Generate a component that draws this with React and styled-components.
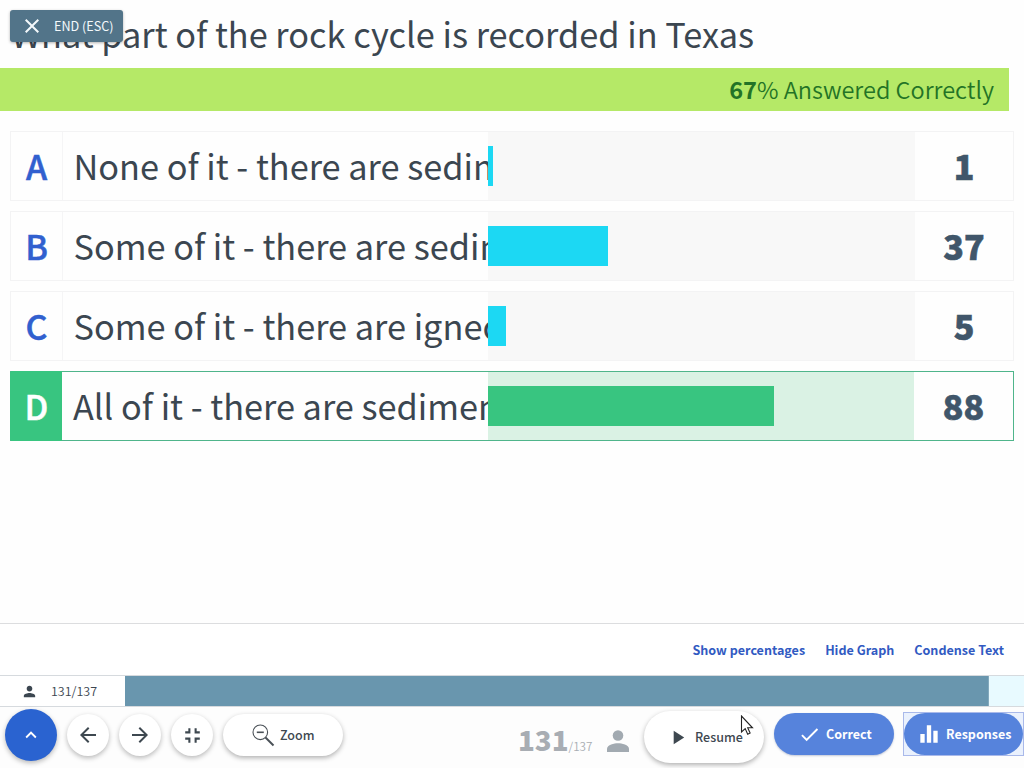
import React from 'react';
import styled, { createGlobalStyle, css } from 'styled-components';
import {
  MdPerson, MdArrowBack, MdArrowForward, MdFullscreenExit, MdKeyboardArrowUp,
  MdClose, MdCheck, MdPlayArrow, MdEqualizer,
} from 'react-icons/md';

const GlobalStyle = createGlobalStyle`
  * { box-sizing: border-box; }
  body {
    margin: 0;
    overflow: hidden;
    font-family: "Noto Sans CJK SC", "Noto Sans", sans-serif;
    color: #3b4650;
  }
  svg { display: block; flex: none; }
`;

const Screen = styled.div`
  position: relative;
  width: 1024px;
  height: 768px;
  display: flex;
  flex-direction: column;
  overflow: hidden;
  background: #fefefe;
`;

const Title = styled.h1`
  margin: 0;
  height: 68px;
  padding-left: 11px;
  font-size: 34.3px;
  font-weight: 400;
  line-height: 66px;
  white-space: nowrap;
`;

const EndButton = styled.button`
  position: absolute;
  left: 10px;
  top: 10px;
  width: 113px;
  height: 32px;
  display: flex;
  align-items: center;
  gap: 10px;
  padding: 0 0 0 10px;
  border: 0;
  border-radius: 3px;
  background: #527489;
  color: #f4f9fc;
  font: inherit;
  font-size: 12.6px;
  line-height: 32px;
  white-space: nowrap;
  box-shadow: 0 1px 3px rgba(0, 0, 0, 0.3);
`;

const Banner = styled.div`
  width: 1009px;
  height: 43px;
  padding-right: 15px;
  background: #b5e967;
  color: #237326;
  font-size: 23.5px;
  font-weight: 350;
  line-height: 43px;
  text-align: right;
  b { font-weight: 700; }
`;

const Answers = styled.div`
  flex: 1;
  display: flex;
  flex-direction: column;
  gap: 10px;
  padding: 20px 10px 0;
`;

const Row = styled.div`
  height: 70px;
  width: 1004px;
  display: flex;
  border: 1px solid ${(p) => (p.$correct ? '#4fb58b' : '#f3f3f4')};
  background: #fefefe;
`;

const Letter = styled.div`
  width: ${(p) => (p.$correct ? 51 : 52)}px;
  text-align: center;
  font-size: 34px;
  font-weight: 500;
  -webkit-text-stroke: 0.5px currentColor;
  line-height: 67px;
  color: ${(p) => (p.$correct ? '#fff' : '#3160cf')};
  ${(p) => (p.$correct
    ? css`background: #38c580; box-shadow: -1px 0 #38c580, 0 1px #38c580, 0 -1px #38c580;`
    : css`border-right: 1px solid #f5f5f6;`)}
`;

const AnswerText = styled.div`
  width: ${(p) => (p.$correct ? 426 : 425)}px;
  padding-left: ${(p) => (p.$correct ? 11 : 10.5)}px;
  overflow: hidden;
  font-size: 34.3px;
  line-height: 66px;
  white-space: nowrap;
`;

const Track = styled.div`
  width: ${(p) => (p.$correct ? 426 : 427)}px;
  padding: 14px 0;
  background: ${(p) => (p.$correct ? '#daf2e4' : '#f8f8f8')};
`;

const Bar = styled.div`
  height: 40px;
  background: ${(p) => (p.$correct ? '#38c580' : '#1cd8f3')};
`;

const Count = styled.div`
  flex: 1;
  text-align: center;
  color: #40566a;
  font-size: 34px;
  font-weight: 900;
  -webkit-text-stroke: 0.6px currentColor;
  line-height: 67px;
`;

const Links = styled.nav`
  height: 52px;
  display: flex;
  justify-content: flex-end;
  gap: 20px;
  padding-right: 20px;
  border-top: 1px solid #dcdddf;
  background: #fff;
`;

const Link = styled.a`
  color: #315ac2;
  font-size: 12.55px;
  font-weight: 700;
  line-height: 52px;
  white-space: nowrap;
`;

const Progress = styled.div`
  height: 32px;
  display: flex;
  border-top: 1px solid #d6dade;
  border-bottom: 1px solid #d6dade;
  background: #e8faff;
`;

const ProgressLabel = styled.div`
  width: 125px;
  display: flex;
  align-items: center;
  gap: 13px;
  padding-left: 21px;
  background: #fff;
  font-size: 12.5px;
  font-weight: 350;
  line-height: 30px;
`;

const ProgressFill = styled.div`
  width: 864px;
  background: #6996ae;
  border-right: 1px solid #83a9bd;
`;

const Toolbar = styled.footer`
  height: 61px;
  display: flex;
  align-items: flex-start;
  background: #fdfdfd;
`;

const RoundButton = styled.button`
  flex: none;
  width: ${(p) => p.$size}px;
  height: ${(p) => p.$size}px;
  margin: ${(p) => p.$margin};
  padding: 0;
  display: flex;
  align-items: center;
  justify-content: center;
  border: 0;
  border-radius: 50%;
  background: ${(p) => (p.$primary ? '#2a63d0' : '#fff')};
  color: ${(p) => (p.$primary ? '#fff' : '#3e4850')};
  box-shadow: 0 2px 5px rgba(0, 0, 0, 0.27);
`;

const Pill = styled.button`
  flex: none;
  width: ${(p) => p.$width || 120}px;
  height: ${(p) => p.$height || 42}px;
  margin: ${(p) => p.$margin};
  padding: 0 0 0 ${(p) => p.$inset}px;
  display: flex;
  align-items: center;
  gap: ${(p) => p.$gap}px;
  border: 0;
  border-radius: 26px;
  background: ${(p) => (p.$primary ? '#5683dc' : '#fff')};
  color: ${(p) => (p.$primary ? '#fff' : '#3e4850')};
  font: inherit;
  font-size: 12.5px;
  font-weight: ${(p) => (p.$primary ? 700 : 500)};
  line-height: 40px;
  white-space: nowrap;
  box-shadow: ${(p) => {
    if (p.$focused) return 'none';
    return p.$primary ? '0 1px 2px rgba(60, 80, 130, 0.3)' : '0 2px 5px rgba(0, 0, 0, 0.3)';
  }};
`;

const FocusRing = styled.div`
  flex: none;
  margin: 5px 0 0 9px;
  border: 1px solid #a9b9ea;
  background: #eaf1fd;
`;

const Tally = styled.div`
  flex: none;
  display: flex;
  align-items: baseline;
  width: 76px;
  margin: 14px 0 0 175px;
  color: #a8adb3;
  line-height: 37px;
  white-space: nowrap;
  b { font-size: 27.7px; font-weight: 900; }
  span { font-size: 11.7px; font-weight: 350; }
`;

const TallyIcon = styled.div`
  flex: none;
  margin: 22px 0 0 12px;
  color: #a2aab1;
`;

const Cursor = styled.svg`
  position: absolute;
  left: 740px;
  top: 715px;
`;

const answers = [
  { letter: 'A', text: 'None of it - there are sedimentary rocks', count: 1, bar: 5 },
  { letter: 'B', text: 'Some of it - there are sedimentary rocks', count: 37, bar: 120 },
  { letter: 'C', text: 'Some of it - there are igneous rocks', count: 5, bar: 18 },
  { letter: 'D', text: 'All of it - there are sedimentary rocks', count: 88, bar: 286, correct: true },
];

export default function App() {
  return (
    <Screen>
      <GlobalStyle />
      <Title>What part of the rock cycle is recorded in Texas</Title>
      <Banner><b>67</b>% Answered Correctly</Banner>
      <Answers>
        {answers.map((a) => (
          <Row key={a.letter} $correct={a.correct}>
            <Letter $correct={a.correct}>{a.letter}</Letter>
            <AnswerText $correct={a.correct}>{a.text}</AnswerText>
            <Track $correct={a.correct}>
              <Bar $correct={a.correct} style={{ width: a.bar }} />
            </Track>
            <Count>{a.count}</Count>
          </Row>
        ))}
      </Answers>
      <Links>
        <Link>Show percentages</Link>
        <Link>Hide Graph</Link>
        <Link>Condense Text</Link>
      </Links>
      <Progress>
        <ProgressLabel><MdPerson size={17} />131/137</ProgressLabel>
        <ProgressFill />
      </Progress>
      <Toolbar>
        <RoundButton $size={52} $margin="2px 0 0 5px" $primary><MdKeyboardArrowUp size={22} /></RoundButton>
        <RoundButton $size={42} $margin="7px 0 0 10px"><MdArrowBack size={24} /></RoundButton>
        <RoundButton $size={42} $margin="7px 0 0 10px"><MdArrowForward size={24} /></RoundButton>
        <RoundButton $size={42} $margin="7px 0 0 10px"><MdFullscreenExit size={25} /></RoundButton>
        <Pill $margin="7px 0 0 10px" $inset={29} $gap={5}>
          <svg width="23" height="23" viewBox="0 0 23 23" fill="none" stroke="#4a5157">
            <circle cx="8.3" cy="8.3" r="7.3" strokeWidth="1.1" />
            <path d="M4.8 8.3h7" strokeWidth="1.6" />
            <path d="M13.5 13.5l8 8" strokeWidth="2" />
          </svg>
          Zoom
        </Pill>
        <Tally><b>131</b><span>/137</span></Tally>
        <TallyIcon>
          <svg width="24" height="24" viewBox="0 0 24 24" fill="currentColor">
            <circle cx="12" cy="6.500" r="5.3" />
            <path d="M1 23v-3.200c0-4 7.300-5.600 11-5.600s11 1.600 11 5.600V23z" />
          </svg>
        </TallyIcon>
        <Pill $margin="4px 0 0 14px" $height={52} $inset={22} $gap={6}><MdPlayArrow size={23} />Resume</Pill>
        <Pill $margin="6px 0 0 10px" $inset={24} $gap={5} $primary><MdCheck size={23} />Correct</Pill>
        <FocusRing><Pill $margin="0" $width={119} $height={42} $inset={12} $gap={4} $primary $focused><MdEqualizer size={26} />Responses</Pill></FocusRing>
      </Toolbar>
      <EndButton><MdClose size={24} />END (ESC)</EndButton>
      <Cursor width="14" height="21" viewBox="0 0 14 21">
        <path d="M1.500 1v16l3.700-3.400 2.500 5.600 2.400-1.100-2.400-5.300h4.800z" fill="#fff" stroke="#222" strokeWidth="1.1" />
      </Cursor>
    </Screen>
  );
}
